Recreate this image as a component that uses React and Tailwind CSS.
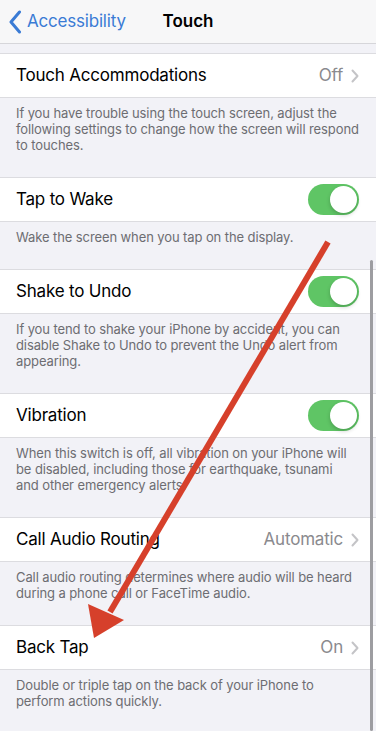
import React from "react";

const font = { fontFamily: "Inter, 'Liberation Sans', sans-serif" };

function Chevron() {
  return (
    <svg width="8" height="14" viewBox="0 0 8 14" className="ml-2 shrink-0">
      <path d="M1.5 1.5 L6.5 7 L1.5 12.5" fill="none" stroke="#c4c4c7" strokeWidth="2" strokeLinecap="round" strokeLinejoin="round" />
    </svg>
  );
}

function Toggle() {
  return (
    <div className="w-[51px] h-[31px] rounded-full bg-[#5fc565] flex items-center justify-end pr-[2px] shrink-0">
      <div className="w-[27px] h-[27px] rounded-full bg-white shadow-[0_2px_4px_rgba(0,0,0,0.2)]" />
    </div>
  );
}

function Row({ label, value, toggle }) {
  return (
    <div className="h-[45px] bg-white border-y border-[#dcdce0] flex items-center pl-4 pr-[17px]">
      <span className="flex-1 text-[17px] text-black tracking-[-0.2px]">{label}</span>
      {toggle ? (
        <Toggle />
      ) : (
        <div className="flex items-center">
          <span className="text-[17px] text-[#8a8a8e] tracking-[-0.2px]">{value}</span>
          <Chevron />
        </div>
      )}
    </div>
  );
}

function Footer({ lines }) {
  return (
    <div className="pl-4 pr-[4px] pt-[7px] pb-[24px] text-[13px] leading-[16px] text-[#6d6d72] tracking-[-0.1px]">
      {lines.map((l, i) => (
        <div key={i} className="whitespace-nowrap">{l}</div>
      ))}
    </div>
  );
}

export default function App() {
  return (
    <div className="relative w-[376px] h-[731px] overflow-hidden bg-[#f2f2f7]" style={font}>
      <div className="h-[44px] bg-[#f7f7f8] border-b border-[#d6d6da] relative flex items-center">
        <div className="flex items-center pl-[8px]">
          <svg width="14" height="24" viewBox="0 0 14 24">
            <path d="M11.5 2 L3 12 L11.5 22" fill="none" stroke="#3a7bd5" strokeWidth="3" strokeLinecap="round" strokeLinejoin="round" />
          </svg>
          <span className="ml-[5px] text-[17px] text-[#3a7bd5] tracking-[-0.2px]">Accessibility</span>
        </div>
        <span className="absolute left-0 right-0 text-center text-[17px] font-semibold text-black pointer-events-none">Touch</span>
      </div>
      <div className="h-[9px]" />
      <Row label="Touch Accommodations" value="Off" />
      <Footer
        lines={[
          "If you have trouble using the touch screen, adjust the",
          "following settings to change how the screen will respond",
          "to touches.",
        ]}
      />
      <Row label="Tap to Wake" toggle />
      <Footer lines={["Wake the screen when you tap on the display."]} />
      <Row label="Shake to Undo" toggle />
      <Footer
        lines={[
          "If you tend to shake your iPhone by accident, you can",
          "disable Shake to Undo to prevent the Undo alert from",
          "appearing.",
        ]}
      />
      <Row label="Vibration" toggle />
      <Footer
        lines={[
          "When this switch is off, all vibration on your iPhone will",
          "be disabled, including those for earthquake, tsunami",
          "and other emergency alerts.",
        ]}
      />
      <Row label="Call Audio Routing" value="Automatic" />
      <Footer
        lines={[
          "Call audio routing determines where audio will be heard",
          "during a phone call or FaceTime audio.",
        ]}
      />
      <Row label="Back Tap" value="On" />
      <Footer
        lines={[
          "Double or triple tap on the back of your iPhone to",
          "perform actions quickly.",
        ]}
      />

      <div className="absolute left-[370px] top-[260px] w-[3px] h-[471px] rounded-full bg-[#9d9da1]" />

      <svg className="absolute inset-0 pointer-events-none" width="376" height="731" viewBox="0 0 376 731">
        <line x1="328" y1="242" x2="110" y2="612" stroke="#d6402b" strokeWidth="6" strokeLinecap="butt" />
        <polygon points="94,638 88,604 124,620" fill="#d6402b" />
      </svg>
    </div>
  );
}
